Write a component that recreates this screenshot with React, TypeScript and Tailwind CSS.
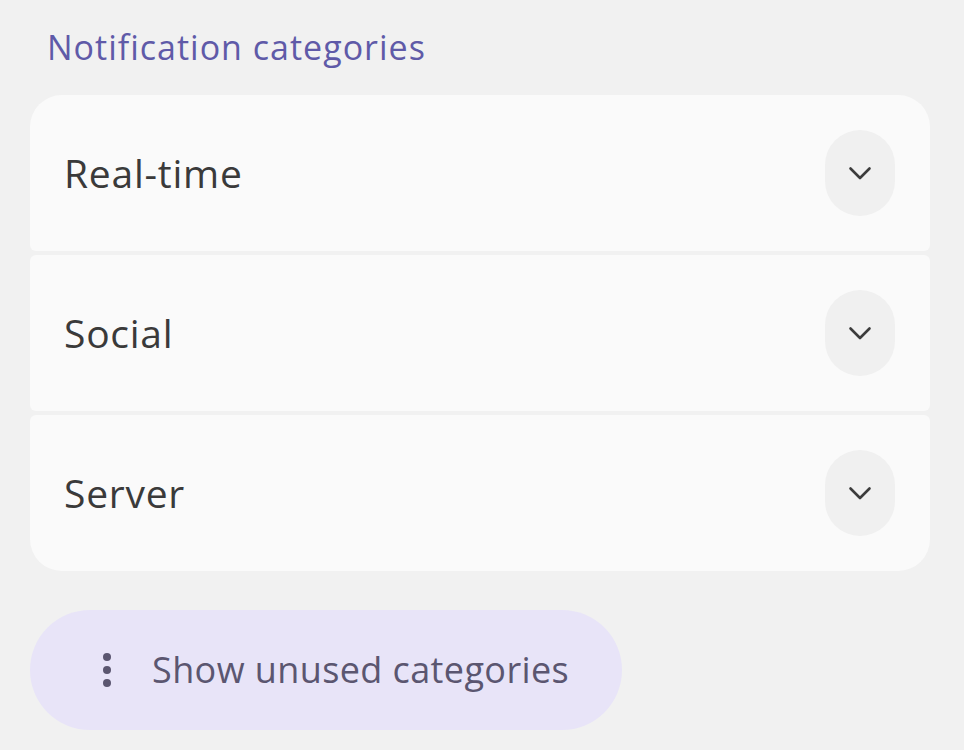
const rows = ["Real-time", "Social", "Server"];

function ChevronDown() {
  return (
    <svg width="24" height="24" viewBox="0 0 24 24" fill="none" stroke="#3c3c3c" strokeWidth="2.6" strokeLinecap="round" strokeLinejoin="round">
      <path d="M2.5 7.5l9.5 9.5 9.5-9.5" />
    </svg>
  );
}

export default function App() {
  return (
    <main
      className="min-h-[750px] w-full bg-[#f1f1f1] px-[30px] pt-[22px]"
      style={{ fontFamily: "'Open Sans', 'Noto Sans', sans-serif" }}
    >
      <h2 className="pl-[17px] text-[34px] leading-[50px] tracking-[1px] text-[#5f5aa8]">Notification categories</h2>

      <div className="mt-[23px] flex w-[900px] flex-col gap-[4px]">
        {rows.map((label, i) => (
          <div
            key={label}
            className={`flex h-[156px] items-center justify-between bg-[#fafafa] pl-[34px] pr-[35px] ${
              i === 0
                ? "rounded-t-[32px] rounded-b-[6px]"
                : i === rows.length - 1
                  ? "rounded-b-[32px] rounded-t-[6px]"
                  : "rounded-[6px]"
            }`}
          >
            <span className="text-[39px] tracking-[0.75px] text-[#3a3a3a]">{label}</span>
            <button
              type="button"
              className="flex h-[86px] w-[70px] items-center justify-center rounded-full bg-[#f0f0f0]"
            >
              <ChevronDown />
            </button>
          </div>
        ))}
      </div>

      <button
        type="button"
        className="mt-[39px] flex h-[120px] w-[592px] items-center rounded-full bg-[#e8e4f8] pl-[70px]"
      >
        <svg width="14" height="40" viewBox="0 0 14 40" fill="#5b5670">
          <circle cx="7" cy="7" r="4" />
          <circle cx="7" cy="20" r="4" />
          <circle cx="7" cy="33" r="4" />
        </svg>
        <span className="ml-[38px] text-[36px] tracking-[0.4px] text-[#5b5670]">Show unused categories</span>
      </button>
    </main>
  );
}
